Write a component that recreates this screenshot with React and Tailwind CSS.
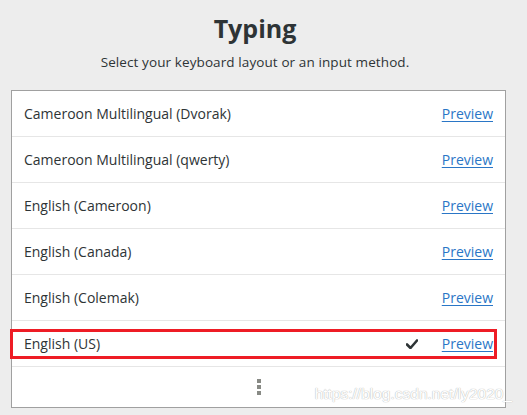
import React from "react";

const layouts = [
  { name: "Cameroon Multilingual (Dvorak)" },
  { name: "Cameroon Multilingual (qwerty)" },
  { name: "English (Cameroon)" },
  { name: "English (Canada)" },
  { name: "English (Colemak)" },
  { name: "English (US)", selected: true },
];

const Check = () => (
  <svg width="12" height="10" viewBox="0 0 12 10" className="text-[#2e3436]">
    <path d="M1 5.5 L4.5 9 L11 1.5" fill="none" stroke="currentColor" strokeWidth="2.6" strokeLinecap="round" strokeLinejoin="round" />
  </svg>
);

const LayoutRow = ({ item }) => (
  <div className="relative h-[46px] flex items-center px-[12px] border-b border-[#e6e6e6]">
    <span className="flex-1 text-[14px] text-[#2e3436]">{item.name}</span>
    {item.selected && (
      <span className="mr-[24px] flex items-center">
        <Check />
      </span>
    )}
    <a className="text-[14px] text-[#2a76c6] underline underline-offset-2">Preview</a>
    {item.selected && (
      <div className="absolute left-[-2px] top-[8px] w-[487px] h-[30px] border-[3px] border-[#ee1c25] pointer-events-none" />
    )}
  </div>
);

export default function App() {
  return (
    <div
      className="relative w-[527px] h-[415px] bg-[#ededed] overflow-hidden"
      style={{ fontFamily: '"Open Sans", "Noto Sans", sans-serif' }}
    >
      <div className="pr-[17px] text-[#2e3436]">
        <h1 className="pt-[12px] text-center text-[25px] leading-[32px] font-bold">Typing</h1>
        <p className="mt-[9px] text-center text-[13.5px] leading-[18px] tracking-[0.1px]">
          Select your keyboard layout or an input method.
        </p>
      </div>
      <div className="mt-[19px] ml-[11px] w-[495px] border border-[#a0a0a0] bg-white">
        {layouts.map((item) => (
          <LayoutRow key={item.name} item={item} />
        ))}
        <div className="h-[40px] flex flex-col items-center justify-center gap-[2px]">
          <span className="w-[4px] h-[4px] bg-[#888a85]" />
          <span className="w-[4px] h-[4px] bg-[#888a85]" />
          <span className="w-[4px] h-[4px] bg-[#888a85]" />
        </div>
      </div>
      <span
        className="absolute right-[15px] bottom-[11px] text-[15.5px] leading-[20px] text-white"
        style={{ fontFamily: '"Liberation Sans", Arial, sans-serif', textShadow: "0 0 1px #bbb, 0 0 1px #bbb" }}
      >
        https://blog.csdn.net/ly2020_
      </span>
    </div>
  );
}
